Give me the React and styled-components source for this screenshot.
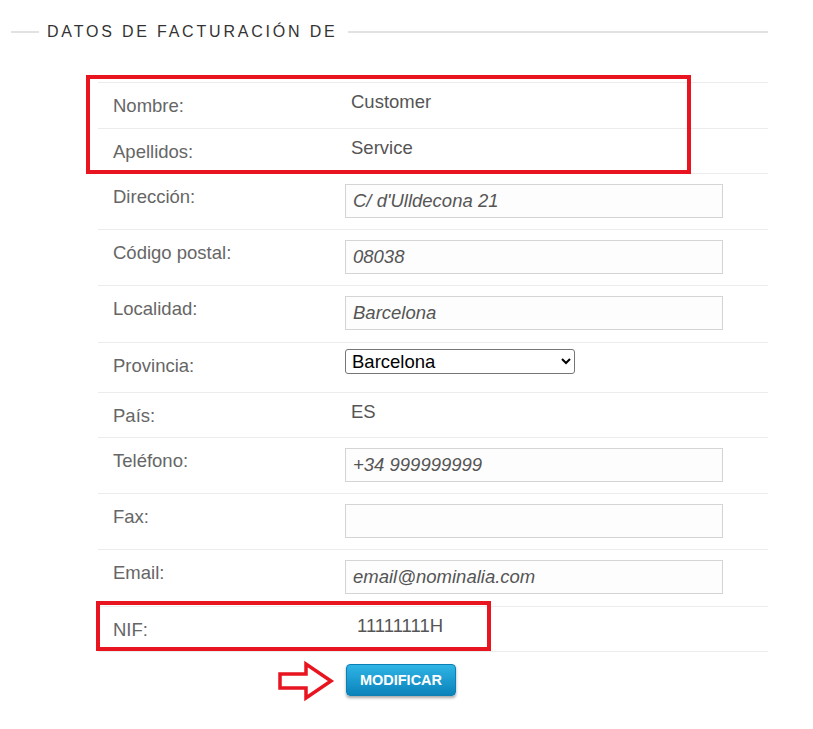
import React from "react";
import styled, { createGlobalStyle } from "styled-components";

const Global = createGlobalStyle`
  html, body { margin: 0; padding: 0; background: #fff; }
  body { font-family: "Liberation Sans", Arial, sans-serif; }
`;

const Page = styled.div`
  position: relative;
  width: 813px;
  min-height: 729px;
  padding: 22px 45px 0 11px;
  box-sizing: border-box;
`;

const Heading = styled.div`
  display: flex;
  align-items: center;
  height: 20px;
`;

const Rule = styled.span`
  flex: ${(p) => (p.$grow ? 1 : "0 0 28px")};
  height: 2px;
  background: #e2e2e2;
`;

const HeadingText = styled.h2`
  margin: 0 10px 0 8px;
  font-size: 16px;
  font-weight: normal;
  line-height: 20px;
  letter-spacing: 2.8px;
  color: #333;
  white-space: nowrap;
`;

const Table = styled.div`
  margin: 40px 0 0 87px;
  width: 670px;
`;

const Row = styled.div`
  display: grid;
  grid-template-columns: 247px 1fr;
  height: ${(p) => p.$h}px;
  box-sizing: border-box;
  border-top: 1px solid #ececec;
  &:last-child {
    border-bottom: 1px solid #ececec;
  }
`;

const Label = styled.div`
  padding: 12px 0 0 15px;
  font-size: 18.5px;
  line-height: 22px;
  color: #666;
`;

const ValueCell = styled.div`
  padding-top: ${(p) => p.$top}px;
  padding-left: ${(p) => p.$indent || 0}px;
`;

const Text = styled.div`
  padding-left: 6px;
  font-size: 18.5px;
  line-height: 22px;
  color: #555;
`;

const Input = styled.input`
  display: block;
  width: 378px;
  height: 34px;
  box-sizing: border-box;
  border: 1px solid #d4d4d4;
  background: #fdfdfd;
  padding: 0 7px;
  font-family: "Liberation Sans", Arial, sans-serif;
  font-size: 18.5px;
  font-style: italic;
  color: #555;
  outline: none;
`;

const Select = styled.select`
  display: block;
  width: 230px;
  height: 25px;
  box-sizing: border-box;
  border: 1px solid #767676;
  border-radius: 3px;
  background: #fff;
  font-family: "Liberation Sans", Arial, sans-serif;
  font-size: 18.5px;
  color: #000;
  padding: 0 2px;
`;

const Actions = styled.div`
  padding: 12px 0 0 335px;
`;

const Button = styled.button`
  width: 110px;
  height: 32px;
  border: 1px solid #0c7fb4;
  border-radius: 4px;
  background: linear-gradient(#30b4e6, #0a83ba);
  box-shadow: 0 2px 3px rgba(0, 0, 0, 0.35);
  color: #fff;
  font-family: "Liberation Sans", Arial, sans-serif;
  font-weight: bold;
  font-size: 14.5px;
  padding: 0;
  cursor: pointer;
`;

const Highlight = styled.div`
  position: absolute;
  left: ${(p) => p.$x}px;
  top: ${(p) => p.$y}px;
  width: ${(p) => p.$w}px;
  height: ${(p) => p.$h}px;
  box-sizing: border-box;
  border: 4px solid #e8141f;
  pointer-events: none;
`;

const Arrow = styled.svg`
  position: absolute;
  left: 277px;
  top: 660px;
`;

const rows = [
  { label: "Nombre:", kind: "text", value: "Customer", h: 46 },
  { label: "Apellidos:", kind: "text", value: "Service", h: 45 },
  { label: "Dirección:", kind: "input", value: "C/ d'Ulldecona 21", h: 56 },
  { label: "Código postal:", kind: "input", value: "08038", h: 56 },
  { label: "Localidad:", kind: "input", value: "Barcelona", h: 57 },
  { label: "Provincia:", kind: "select", value: "Barcelona", h: 50 },
  { label: "País:", kind: "text", value: "ES", h: 45 },
  { label: "Teléfono:", kind: "input", value: "+34 999999999", h: 56 },
  { label: "Fax:", kind: "input", value: "", h: 56 },
  { label: "Email:", kind: "input", value: "email@nominalia.com", h: 57 },
  { label: "NIF:", kind: "text", value: "11111111H", h: 46, indent: 6 },
];

const tops = { text: 8, input: 10, select: 6 };

function Field({ row }) {
  if (row.kind === "input") return <Input defaultValue={row.value} />;
  if (row.kind === "select")
    return (
      <Select defaultValue={row.value}>
        <option>Barcelona</option>
        <option>Girona</option>
        <option>Lleida</option>
        <option>Tarragona</option>
      </Select>
    );
  return <Text>{row.value}</Text>;
}

export default function App() {
  return (
    <>
      <Global />
      <Page>
        <Heading>
          <Rule />
          <HeadingText>DATOS DE FACTURACIÓN DE</HeadingText>
          <Rule $grow />
        </Heading>
        <Table>
          {rows.map((r) => (
            <Row key={r.label} $h={r.h}>
              <Label>{r.label}</Label>
              <ValueCell $top={tops[r.kind]} $indent={r.indent}>
                <Field row={r} />
              </ValueCell>
            </Row>
          ))}
        </Table>
        <Actions>
          <Button type="button">MODIFICAR</Button>
        </Actions>
        <Highlight $x={86} $y={75} $w={605} $h={99} />
        <Highlight $x={96} $y={601} $w={395} $h={50} />
        <Arrow width="58" height="42" viewBox="0 0 58 42">
          <path
            d="M3 14 H29 V4 L54 21 L29 38 V28 H3 Z"
            fill="#fff"
            stroke="#e8141f"
            strokeWidth="3.5"
            strokeLinejoin="miter"
          />
        </Arrow>
      </Page>
    </>
  );
}
